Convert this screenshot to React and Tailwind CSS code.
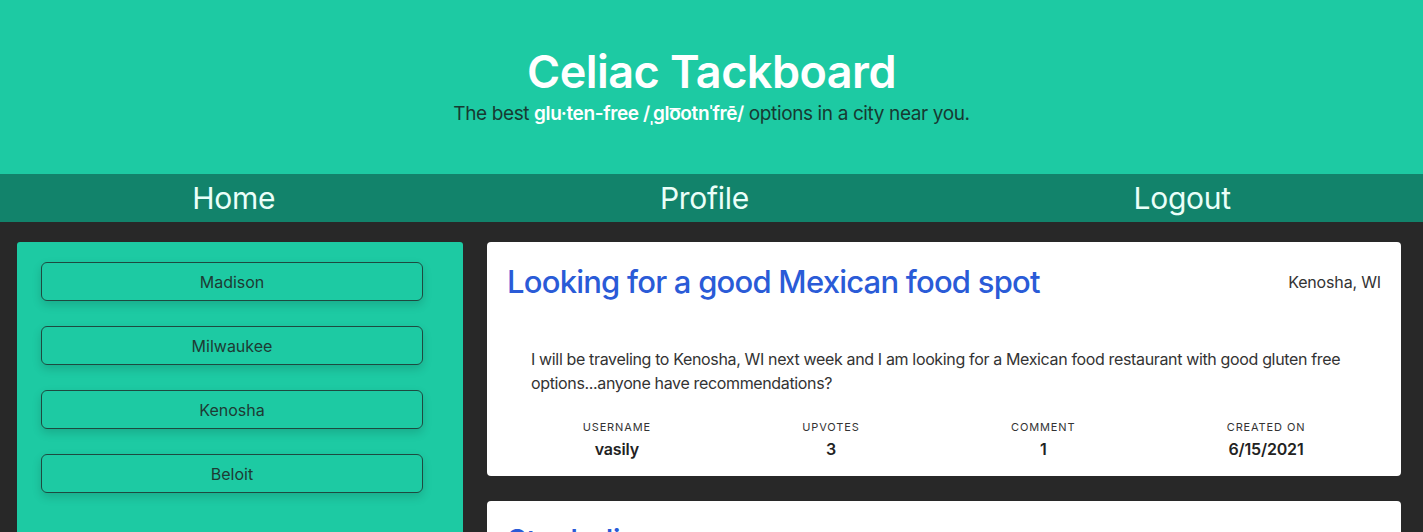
const cities = ['Madison', 'Milwaukee', 'Kenosha', 'Beloit'];

const posts = [
  {
    title: 'Looking for a good Mexican food spot',
    location: 'Kenosha, WI',
    body: 'I will be traveling to Kenosha, WI next week and I am looking for a Mexican food restaurant with good gluten free options...anyone have recommendations?',
    username: 'vasily',
    upvotes: 3,
    comments: 1,
    created: '6/15/2021',
  },
  {
    title: 'Steak dinner',
    location: 'Madison, WI',
    body: 'Where can I get a safe steak dinner downtown?',
    username: 'anna',
    upvotes: 2,
    comments: 0,
    created: '6/14/2021',
  },
];

const Stat = ({ label, value }) => (
  <div className="flex flex-col items-center">
    <span className="text-[11px] leading-4 tracking-[0.08em] uppercase text-[#333]">{label}</span>
    <span className="text-base leading-6 font-semibold text-[#222] mt-[2px] tracking-[-0.01em]">{value}</span>
  </div>
);

const PostCard = ({ post }) => (
  <div className="bg-white rounded-[4px] pt-5 pb-[15px]">
    <div className="flex items-start justify-between px-5">
      <h2 className="text-[31px] leading-10 font-medium text-[#2a5bd7] tracking-[-0.025em]">{post.title}</h2>
      <span className="text-base leading-6 text-[#333] mt-[8px] tracking-[-0.01em]">{post.location}</span>
    </div>
    <p className="px-[44px] mt-[45px] text-base leading-6 text-[#333] tracking-[-0.022em]">{post.body}</p>
    <div className="flex justify-around px-5 mt-6">
      <Stat label="Username" value={post.username} />
      <Stat label="Upvotes" value={post.upvotes} />
      <Stat label="Comment" value={post.comments} />
      <Stat label="Created On" value={post.created} />
    </div>
  </div>
);

export default function App() {
  return (
    <div className="min-h-screen bg-[#282828] font-['Inter',sans-serif]">
      <header className="bg-[#1dcaa3] pt-12 pb-[46px] text-center">
        <h1 className="text-[45px] leading-[48px] font-semibold text-white tracking-[-0.012em]">Celiac Tackboard</h1>
        <p className="mt-1 text-[19px] leading-7 text-[#173a32] tracking-[-0.02em]">
          The best{' '}
          <span className="font-semibold text-white">glu·ten-free /ˌɡlo͞otnˈfrē/</span>{' '}
          options in a city near you.
        </p>
      </header>

      <nav className="bg-[#12836b] h-12 flex items-center justify-around text-[30px] leading-9 text-[#eafff9] tracking-[-0.01em]">
        <a href="#">Home</a>
        <a href="#">Profile</a>
        <a href="#">Logout</a>
      </nav>

      <main className="flex gap-6 px-[17px] pt-5 pr-[22px]">
        <aside className="w-[446px] shrink-0 bg-[#1dcaa3] rounded-[3px] pt-5 pb-10 flex flex-col gap-[25px]">
          {cities.map((c) => (
            <button
              key={c}
              className="ml-6 w-[382px] h-[39px] rounded-md border border-[#1d4a40] text-base text-[#1d3b34] shadow-[0_4px_10px_rgba(0,0,0,0.15)]"
            >
              {c}
            </button>
          ))}
        </aside>

        <section className="flex-1 flex flex-col gap-[25px]">
          {posts.map((p) => (
            <PostCard key={p.title} post={p} />
          ))}
        </section>
      </main>
    </div>
  );
}
